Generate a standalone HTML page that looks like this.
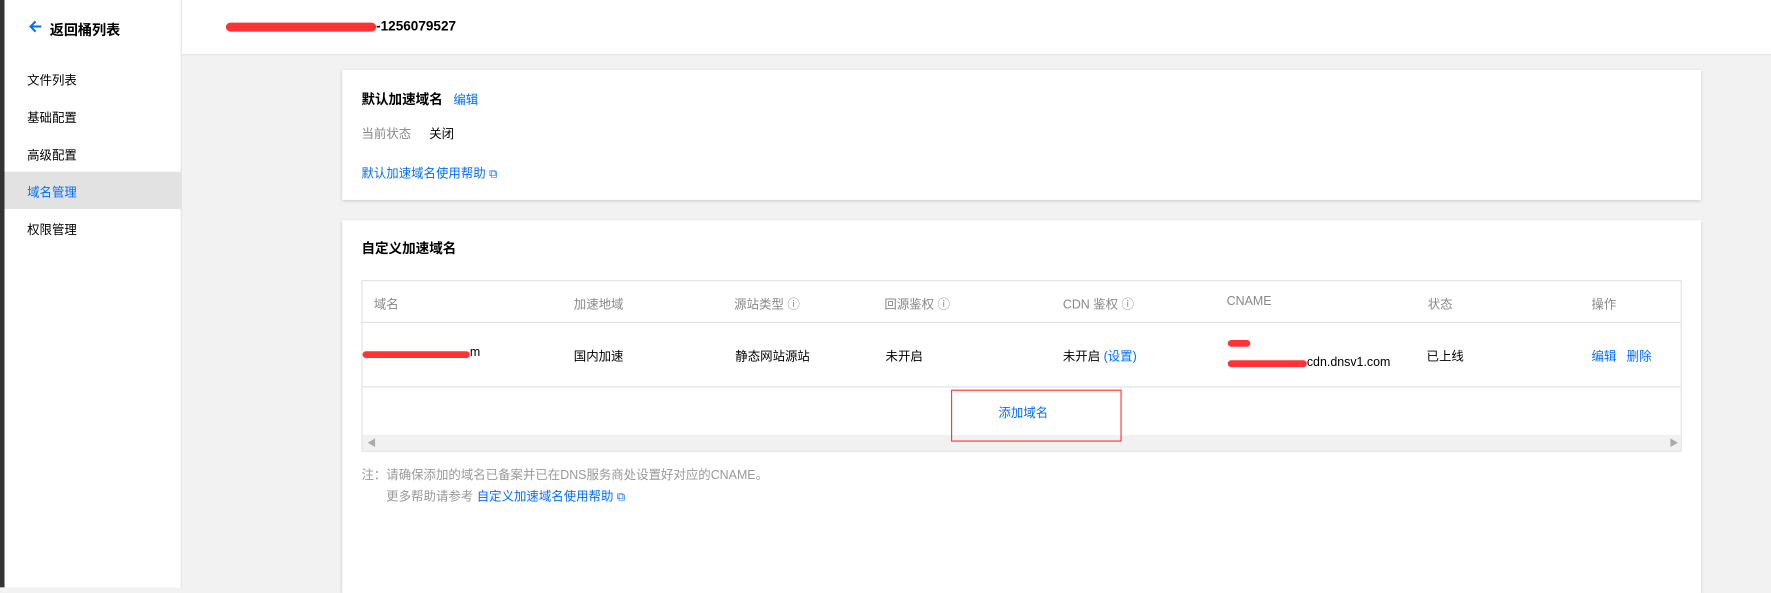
<!DOCTYPE html><html><head><meta charset="utf-8"><style>
*{margin:0;padding:0;box-sizing:border-box}
html,body{width:1771px;height:516px;overflow:hidden;background:#f2f2f2}
#w{position:absolute;left:0;top:0;width:1568px;height:520px;transform:scale(1.1295);transform-origin:0 0;font-family:"Liberation Sans","Noto Sans CJK SC",sans-serif;font-size:11px;color:#000}
.a{position:absolute}
.blue{color:#006eff}
.red{background:#f33;border-radius:4px;height:6px}
</style></head><body><div id="w">
<div class="a" style="left:0;top:0;width:4px;height:520px;background:#333"></div>
<div class="a" style="left:4px;top:0;width:157px;height:520px;background:#fff;border-right:1px solid #e2e2e2"></div>
<div class="a" style="left:161px;top:0;width:1407px;height:49px;background:#fff;border-bottom:1px solid #e2e2e2"></div>
<svg class="a" style="left:25px;top:18px" width="12" height="11" viewBox="0 0 12 11"><path d="M11.5 5.5H2M6.5 1L2 5.5l4.5 4.5" stroke="#006eff" stroke-width="1.8" fill="none"/></svg>
<div class="a" style="left:44px;top:16px;font-size:12.5px;font-weight:bold">返回桶列表</div>
<div class="a red" style="left:200px;top:20px;width:133px;height:8px"></div>
<div class="a" style="left:333px;top:16px;font-size:12px;font-weight:bold">-1256079527</div>
<div class="a" style="left:24px;top:63px">文件列表</div>
<div class="a" style="left:24px;top:96px">基础配置</div>
<div class="a" style="left:24px;top:129px">高级配置</div>
<div class="a" style="left:4px;top:152px;width:157px;height:33px;background:#e2e2e2"></div>
<div class="a blue" style="left:24px;top:162px">域名管理</div>
<div class="a" style="left:24px;top:195px">权限管理</div>
<div class="a" style="left:303px;top:62px;width:1203px;height:115px;background:#fff;box-shadow:0 1px 3px rgba(0,0,0,.2)"></div>
<div class="a" style="left:320px;top:79px;font-size:12px;font-weight:bold">默认加速域名 <span class="blue" style="font-weight:normal;font-size:11px;margin-left:6px">编辑</span></div>
<div class="a" style="left:320px;top:110px;color:#888">当前状态</div>
<div class="a" style="left:380px;top:110px">关闭</div>
<div class="a blue" style="left:320px;top:145px">默认加速域名使用帮助 <span style="font-size:10px">⧉</span></div>
<div class="a" style="left:303px;top:195px;width:1203px;height:330px;background:#fff;box-shadow:0 1px 3px rgba(0,0,0,.2)"></div>
<div class="a" style="left:320px;top:211px;font-size:12px;font-weight:bold">自定义加速域名</div>
<div class="a" style="left:320px;top:248px;width:1169px;height:152px;border:1px solid #e2e2e2;background:#fff"></div>
<div class="a" style="left:321px;top:285px;width:1167px;height:1px;background:#e2e2e2"></div>
<div class="a" style="left:321px;top:342px;width:1167px;height:1px;background:#e2e2e2"></div>
<div class="a" style="left:321px;top:385px;width:1167px;height:14px;background:#f1f1f1"></div>
<div class="a" style="left:325px;top:387px;color:#aaa;font-size:8px">◀</div>
<div class="a" style="left:1478px;top:387px;color:#aaa;font-size:8px">▶</div>
<div class="a" style="top:261px;left:331px;color:#888;width:1200px">
<span class="a" style="left:0">域名</span><span class="a" style="left:177px">加速地域</span><span class="a" style="left:319px">源站类型 ⓘ</span><span class="a" style="left:452px">回源鉴权 ⓘ</span><span class="a" style="left:610px">CDN 鉴权 ⓘ</span><span class="a" style="left:755px">CNAME</span><span class="a" style="left:933px">状态</span><span class="a" style="left:1078px">操作</span></div>
<div class="a red" style="left:321px;top:311px;width:95px"></div>
<div class="a" style="left:416px;top:306px">m</div>
<div class="a" style="left:508px;top:307px">国内加速</div>
<div class="a" style="left:651px;top:307px">静态网站源站</div>
<div class="a" style="left:784px;top:307px">未开启</div>
<div class="a" style="left:941px;top:307px">未开启 <span class="blue">(设置)</span></div>
<div class="a red" style="left:1087px;top:301px;width:20px"></div>
<div class="a red" style="left:1087px;top:319px;width:70px"></div>
<div class="a" style="left:1157px;top:315px">cdn.dnsv1.com</div>
<div class="a" style="left:1263px;top:307px">已上线</div>
<div class="a blue" style="left:1409px;top:307px">编辑 &nbsp;&nbsp;删除</div>
<div class="a" style="left:842px;top:345px;width:151px;height:46px;border:1px solid #f33"></div>
<div class="a blue" style="left:884px;top:357px">添加域名</div>
<div class="a" style="left:320px;top:412px;color:#999">注：请确保添加的域名已备案并已在DNS服务商处设置好对应的CNAME。</div>
<div class="a" style="left:342px;top:431px;color:#999">更多帮助请参考 <span class="blue">自定义加速域名使用帮助 <span style="font-size:10px">⧉</span></span></div>
</div></body></html>
